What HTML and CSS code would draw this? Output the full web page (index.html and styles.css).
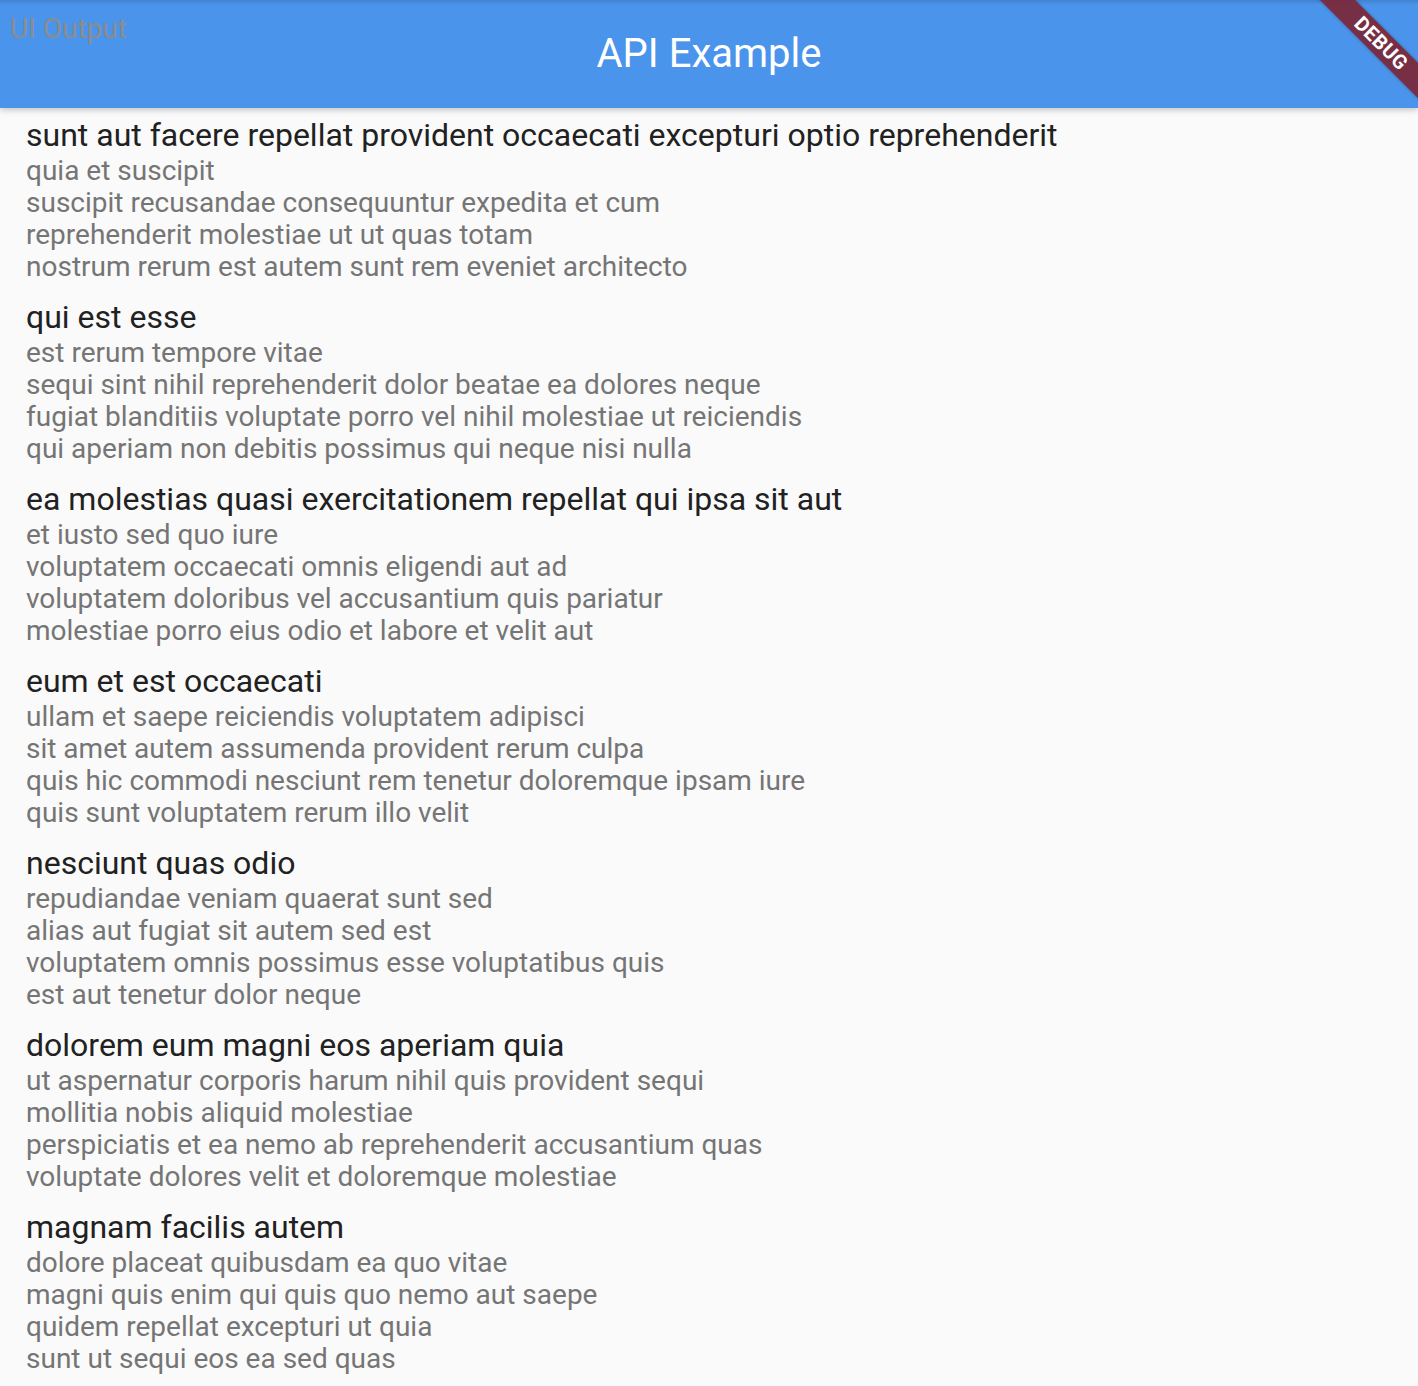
FILE: index.html
```html
<!DOCTYPE html>
<html lang="en">
<head>
    <meta charset="UTF-8">
    <meta name="viewport" content="width=device-width, initial-scale=1.0">
    <title>API Example</title>
    <link rel="stylesheet" href="styles.css">
</head>
<body>
    <div class="app">
        <header class="app-bar">
            <h1>API Example</h1>
        </header>

        <ul class="post-list">
            <li class="post">
                <div class="post-title">sunt aut facere repellat provident occaecati excepturi optio reprehenderit</div>
                <div class="post-body">quia et suscipit<br>suscipit recusandae consequuntur expedita et cum<br>reprehenderit molestiae ut ut quas totam<br>nostrum rerum est autem sunt rem eveniet architecto</div>
            </li>
            <li class="post">
                <div class="post-title">qui est esse</div>
                <div class="post-body">est rerum tempore vitae<br>sequi sint nihil reprehenderit dolor beatae ea dolores neque<br>fugiat blanditiis voluptate porro vel nihil molestiae ut reiciendis<br>qui aperiam non debitis possimus qui neque nisi nulla</div>
            </li>
            <li class="post">
                <div class="post-title">ea molestias quasi exercitationem repellat qui ipsa sit aut</div>
                <div class="post-body">et iusto sed quo iure<br>voluptatem occaecati omnis eligendi aut ad<br>voluptatem doloribus vel accusantium quis pariatur<br>molestiae porro eius odio et labore et velit aut</div>
            </li>
            <li class="post">
                <div class="post-title">eum et est occaecati</div>
                <div class="post-body">ullam et saepe reiciendis voluptatem adipisci<br>sit amet autem assumenda provident rerum culpa<br>quis hic commodi nesciunt rem tenetur doloremque ipsam iure<br>quis sunt voluptatem rerum illo velit</div>
            </li>
            <li class="post">
                <div class="post-title">nesciunt quas odio</div>
                <div class="post-body">repudiandae veniam quaerat sunt sed<br>alias aut fugiat sit autem sed est<br>voluptatem omnis possimus esse voluptatibus quis<br>est aut tenetur dolor neque</div>
            </li>
            <li class="post">
                <div class="post-title">dolorem eum magni eos aperiam quia</div>
                <div class="post-body">ut aspernatur corporis harum nihil quis provident sequi<br>mollitia nobis aliquid molestiae<br>perspiciatis et ea nemo ab reprehenderit accusantium quas<br>voluptate dolores velit et doloremque molestiae</div>
            </li>
            <li class="post">
                <div class="post-title">magnam facilis autem</div>
                <div class="post-body">dolore placeat quibusdam ea quo vitae<br>magni quis enim qui quis quo nemo aut saepe<br>quidem repellat excepturi ut quia<br>sunt ut sequi eos ea sed quas</div>
            </li>
        </ul>

        <div class="output-label">UI Output</div>
        <div class="debug-banner">DEBUG</div>
    </div>
</body>
</html>
```

FILE: styles.css
```css
html, body {
    margin: 0;
    height: 100%;
    overflow: hidden;
}

body {
    font-family: Roboto, 'Noto Sans', sans-serif;
    background-color: #fafafa;
    color: #212121;
}

.app {
    position: relative;
    height: 100%;
    overflow: hidden;
}

.app-bar {
    position: relative;
    z-index: 1;
    height: 108px;
    display: flex;
    align-items: center;
    justify-content: center;
    background-color: #4a94eb;
    background-image: linear-gradient(to bottom, rgba(0, 0, 0, 0.12), rgba(0, 0, 0, 0) 5px);
    box-shadow: 0 2px 6px rgba(0, 0, 0, 0.22);
}

.app-bar h1 {
    margin: 0;
    font-size: 40px;
    font-weight: 400;
    color: #fff;
    padding-bottom: 2px;
}

.post-list {
    list-style: none;
    margin: 0;
    padding: 1px 0 0;
}

.post {
    padding: 7px 26px 8px;
}

.post-title {
    font-size: 32px;
    line-height: 39px;
    color: #212121;
}

.post-body {
    font-size: 28px;
    line-height: 32px;
    color: #757575;
}

/* overlays */
.output-label {
    position: absolute;
    top: 11px;
    left: 10px;
    z-index: 2;
    font-size: 28px;
    line-height: 36px;
    color: #8c8c8c;
}

.debug-banner {
    position: absolute;
    z-index: 3;
    top: 31px;
    left: 1281px;
    width: 200px;
    height: 25px;
    line-height: 25px;
    transform: rotate(45deg);
    background-color: rgba(122, 40, 60, 0.94);
    color: #fff;
    font-size: 20px;
    font-weight: 700;
    text-align: center;
    letter-spacing: 0.5px;
    box-shadow: 0 0 3px rgba(0, 0, 0, 0.3);
}
```
